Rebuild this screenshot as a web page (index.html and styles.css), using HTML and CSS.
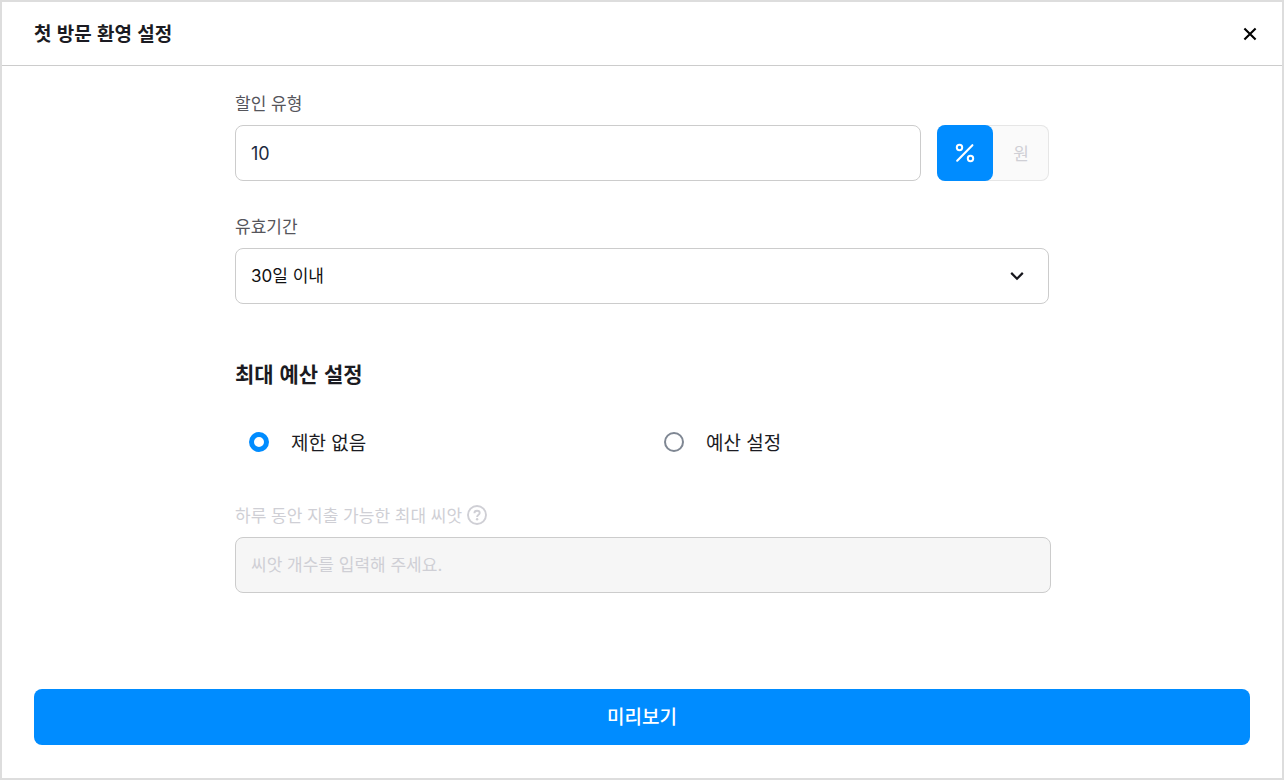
FILE: index.html
```html
<!DOCTYPE html>
<html lang="ko">
<head>
  <meta charset="utf-8">
  <meta name="viewport" content="width=device-width, initial-scale=1">
  <title>첫 방문 환영 설정</title>
  <link rel="stylesheet" href="styles.css">
</head>
<body>
  <div class="dialog" role="dialog" aria-labelledby="dialog-title">
    <header class="dialog-header">
      <h1 class="dialog-title" id="dialog-title">첫 방문 환영 설정</h1>
      <button class="close-button" type="button" aria-label="닫기">
        <svg class="icon" width="24" height="24" viewBox="0 0 24 24" aria-hidden="true">
          <path d="M6.4 6.4 17.6 17.6M17.6 6.4 6.4 17.6" stroke="#000" stroke-width="2.100" fill="none"/>
        </svg>
      </button>
    </header>

    <form class="form">
      <div class="content">
        <div class="fields">
          <div class="field">
            <label class="label" for="discount">할인 유형</label>
            <div class="discount-row">
              <input class="control control-number" id="discount" type="text" inputmode="numeric" value="10">
              <div class="unit-switch" role="group" aria-label="할인 단위">
                <button class="unit unit-active" type="button" aria-pressed="true" aria-label="퍼센트">
                  <svg class="icon" width="24" height="24" viewBox="0 0 24 24" aria-hidden="true" fill="none" stroke="#fff">
                    <path d="M4.2 19.7 19.4 4.2" stroke-width="2.100" stroke-linecap="round"/>
                    <circle cx="6.5" cy="6.5" r="2.7" stroke-width="2"/>
                    <circle cx="17.5" cy="17.5" r="2.7" stroke-width="2"/>
                  </svg>
                </button>
                <button class="unit" type="button" aria-pressed="false">원</button>
              </div>
            </div>
          </div>

          <div class="field">
            <label class="label" for="period">유효기간</label>
            <div class="select-box">
              <select class="control" id="period">
                <option>30일 이내</option>
              </select>
              <svg class="select-arrow" width="24" height="24" viewBox="0 0 24 24" aria-hidden="true">
                <path d="M6.2 8.900 12 14.700l5.800-5.800" stroke="#16161d" stroke-width="2.200" fill="none"/>
              </svg>
            </div>
          </div>
        </div>

        <h2 class="section-title" id="budget-title">최대 예산 설정</h2>
        <div class="options" role="radiogroup" aria-labelledby="budget-title">
          <label class="option"><input class="radio" type="radio" name="budget" checked>제한 없음</label>
          <label class="option"><input class="radio" type="radio" name="budget">예산 설정</label>
        </div>

        <div class="field field-disabled">
          <div class="label-row">
            <label class="label" for="seeds">하루 동안 지출 가능한 최대 씨앗</label>
            <svg class="icon" width="20" height="20" viewBox="0 0 20 20" aria-hidden="true" fill="none" stroke="#cfcfd5">
              <circle cx="10" cy="10" r="9" stroke-width="1.900"/>
              <path d="M7.400 8.200C7.400 6.700 8.500 5.700 10 5.700S12.700 6.700 12.700 8C12.700 9.700 10.100 9.800 10.100 11.900" stroke-width="1.900"/>
              <circle cx="10.100" cy="14.200" r="1.200" fill="#cfcfd5" stroke="none"/>
            </svg>
          </div>
          <input class="control" id="seeds" type="text" placeholder="씨앗 개수를 입력해 주세요." disabled>
        </div>
      </div>

      <button class="submit-button" type="button">미리보기</button>
    </form>
  </div>
</body>
</html>
```
FILE: styles.css
```css
*,
*::before,
*::after {
  box-sizing: border-box;
}

body {
  margin: 0;
  font-family: Inter, "Noto Sans CJK KR", sans-serif;
  color: #1b1b22;
  background: #fff;
}

button,
input,
select {
  font: inherit;
  color: inherit;
}

button {
  padding: 0;
  border: 0;
  cursor: pointer;
}

.dialog {
  display: flex;
  flex-direction: column;
  min-height: 100vh;
  border: 2px solid #ddd;
}

.dialog-header {
  display: flex;
  align-items: center;
  justify-content: space-between;
  height: 64px;
  padding: 0 20px 0 32px;
  border-bottom: 1px solid #ccc;
}

.dialog-title {
  margin: 0;
  padding-bottom: 2px;
  font-family: "Noto Sans CJK KR", sans-serif;
  font-size: 19px;
  font-weight: 700;
  line-height: 28px;
}

.close-button {
  background: none;
}

.icon {
  display: block;
}

.form {
  display: flex;
  flex: 1;
  flex-direction: column;
  width: 100%;
  padding: 24px 32px 33px;
}

.content {
  width: 100%;
  max-width: 814px;
  margin: 0 auto;
}

.fields {
  display: grid;
  gap: 32px;
}

.field {
  display: flex;
  flex-direction: column;
  gap: 10px;
}

.label {
  font-family: "Noto Sans CJK KR", sans-serif;
  font-size: 17px;
  line-height: 25px;
  color: #55555b;
}

.label-row {
  display: flex;
  align-items: center;
  gap: 5px;
}

.control {
  width: 100%;
  height: 56px;
  padding: 0 15px;
  border: 1px solid #ccc;
  border-radius: 8px;
  background: #fff;
  font-size: 17px;
  color: #111;
  appearance: none;
}

.control-number {
  flex: 1;
  min-width: 0;
  font-size: 18px;
  color: #1c2b40;
}

.discount-row {
  display: flex;
  gap: 16px;
}

.unit-switch {
  display: flex;
  border-radius: 8px;
  background: #fafafa;
  box-shadow: inset 0 0 0 1px #e6e6e6;
}

.unit {
  display: grid;
  place-items: center;
  width: 56px;
  height: 56px;
  padding-bottom: 2px;
  border-radius: 8px;
  background: none;
  font-size: 17px;
  color: #cfcfd5;
}

.unit-active {
  padding: 0;
  background: #008cff;
}

.select-box {
  position: relative;
}

.select-arrow {
  position: absolute;
  top: 16px;
  right: 20px;
  pointer-events: none;
}

.section-title {
  margin: 53px 0 0;
  font-family: "Noto Sans CJK KR", sans-serif;
  font-size: 21px;
  font-weight: 700;
  line-height: 32px;
}

.options {
  display: grid;
  grid-template-columns: 1fr 1fr;
  gap: 16px;
  margin-top: 39px;
}

.option {
  display: flex;
  align-items: center;
  gap: 22px;
  padding-left: 14px;
  font-family: "Noto Sans CJK KR", sans-serif;
  font-size: 19px;
  line-height: 28px;
}

.radio {
  width: 20px;
  height: 20px;
  margin: 0;
  border: 2px solid #7f8793;
  border-radius: 50%;
  background: #fff;
  appearance: none;
}

.radio:checked {
  border: 5px solid #008cff;
}

.field-disabled {
  margin: 46px -2px 0 0;
}

.field-disabled .label,
.control::placeholder {
  color: #cfcfd5;
}

.control:disabled {
  background: #f6f6f6;
}

.submit-button {
  flex-shrink: 0;
  height: 56px;
  margin-top: auto;
  padding-bottom: 3px;
  border-radius: 8px;
  background: #008cff;
  font-size: 19px;
  font-weight: 500;
  color: #fff;
}
```
